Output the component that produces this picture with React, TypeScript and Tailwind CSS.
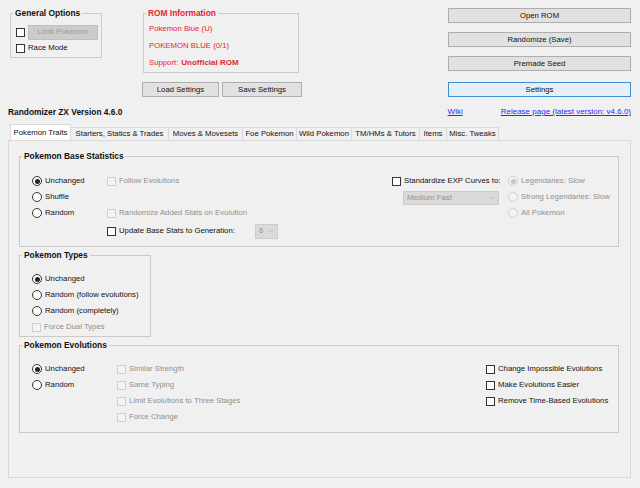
import { ChevronDown } from "lucide-react";
import type { ReactNode } from "react";

const Check = ({ label, disabled }: { label: string; disabled?: boolean }) => (
  <div className="flex items-center gap-[3px] h-[16px] whitespace-nowrap">
    <span
      className={`size-[9px] shrink-0 border ${
        disabled ? "border-[#d0d0d0] bg-[#f3f3f3]" : "border-[#333333] bg-white"
      }`}
    />
    <span className={disabled ? "text-[#8f8f8f]" : ""}>{label}</span>
  </div>
);

const Radio = ({ label, checked, disabled }: { label: string; checked?: boolean; disabled?: boolean }) => (
  <div className="flex items-center gap-[3px] h-[16px] whitespace-nowrap">
    <span
      className={`size-[10px] shrink-0 rounded-full border flex items-center justify-center ${
        disabled ? "border-[#d0d0d0] bg-[#f3f3f3]" : "border-[#333333] bg-white"
      }`}
    >
      {checked && (
        <span className={`size-[5px] rounded-full ${disabled ? "bg-[#c4c4c4]" : "bg-[#222222]"}`} />
      )}
    </span>
    <span className={disabled ? "text-[#8f8f8f]" : ""}>{label}</span>
  </div>
);

// fieldset keeps no padding so the legend sits 5px from the border; padding goes on the inner div
const Group = ({
  title,
  className,
  inner,
  children,
}: {
  title: string;
  className: string;
  inner: string;
  children: ReactNode;
}) => (
  <fieldset className={`border border-[#cacaca] ${className}`}>
    <legend className="ml-[2px] px-[2px] font-bold text-[8.4px] leading-[10px]">{title}</legend>
    <div className={inner}>{children}</div>
  </fieldset>
);

const Btn = ({ label, className }: { label: string; className: string }) => (
  <div
    className={`h-[15px] flex items-center justify-center border border-[#adadad] bg-[#e1e1e1] ${className}`}
  >
    {label}
  </div>
);

const Combo = ({ value, className }: { value: string; className: string }) => (
  <div
    className={`flex items-center justify-between border border-[#cccccc] bg-[#dadada] text-[#939393] pl-[3px] pr-[2px] ${className}`}
  >
    <span>{value}</span>
    <ChevronDown size={8} strokeWidth={1.5} className="text-[#a8a8a8]" />
  </div>
);

const tabs = [
  { name: "Pokemon Traits", w: "w-[61px]" },
  { name: "Starters, Statics & Trades", w: "w-[98px]" },
  { name: "Moves & Movesets", w: "w-[74px]" },
  { name: "Foe Pokemon", w: "w-[54px]" },
  { name: "Wild Pokemon", w: "w-[55px]" },
  { name: "TM/HMs & Tutors", w: "w-[68px]" },
  { name: "Items", w: "w-[27px]" },
  { name: "Misc. Tweaks", w: "w-[52px]" },
];

export default function App() {
  return (
    <div className="w-[640px] h-[488px] overflow-hidden bg-[#f0f0f0] pt-[8px] text-[7.75px] leading-[10px] text-[#111111] font-['Liberation_Sans',Arial,sans-serif]">
      {/* top area */}
      <div className="flex h-[91px]">
        <Group title="General Options" className="ml-[10px] w-[92px] h-[50px]" inner="pl-[5px] pt-[6px]">
          <div className="flex items-center gap-[3px] h-[16px]">
            <span className="size-[9px] border border-[#333333] bg-white" />
            <div className="w-[70px] h-[15px] flex items-center justify-center bg-[#cccccc] border border-[#bfbfbf] text-[#9a9a9a]">
              Limit Pokemon
            </div>
          </div>
          <Check label="Race Mode" />
        </Group>

        <div className="ml-[40px] w-[160px] flex flex-col">
          <Group
            title="ROM Information"
            className="ml-[1px] w-[156px] h-[65px] text-[#e3262e]"
            inner="pl-[5px] pt-[2px]"
          >
            <div className="h-[17px] flex items-center">Pokemon Blue (U)</div>
            <div className="h-[17px] flex items-center">POKEMON BLUE (0/1)</div>
            <div className="h-[17px] flex items-center gap-[3px]">
              Support: <span className="font-bold text-[8px]">Unofficial ROM</span>
            </div>
          </Group>
          <div className="flex gap-[3px] mt-[9px]">
            <Btn label="Load Settings" className="w-[77px]" />
            <Btn label="Save Settings" className="w-[80px]" />
          </div>
        </div>

        <div className="ml-auto mr-[9px] w-[183px] flex flex-col">
          <Btn label="Open ROM" className="w-full" />
          <Btn label="Randomize (Save)" className="w-full mt-[9px]" />
          <Btn label="Premade Seed" className="w-full mt-[9px]" />
          <div className="h-[15px] mt-[11px] flex items-center justify-center border border-[#3d8ed3] bg-[#e4eff9]">
            Settings
          </div>
        </div>
      </div>

      {/* version + links */}
      <div className="flex items-center h-[10px] mt-[8px]">
        <span className="ml-[8px] font-bold text-[8.4px]">Randomizer ZX Version 4.6.0</span>
        <span className="ml-auto text-[8px] text-[#2a2aff] underline">Wiki</span>
        <span className="ml-[38px] mr-[9px] text-[8px] text-[#2a2aff] underline">
          Release page (latest version: v4.6.0)
        </span>
      </div>

      {/* tabs */}
      <div className="flex items-end ml-[10px] mt-[7px] h-[16px]">
        {tabs.map((t, i) => (
          <div
            key={t.name}
            className={`${t.w} flex items-center justify-center whitespace-nowrap border-t border-r border-[#d9d9d9] ${
              i === 0 ? "h-[16px] bg-white border-l" : "h-[13px] bg-[#f0f0f0]"
            }`}
          >
            {t.name}
          </div>
        ))}
      </div>

      {/* tab panel */}
      <div className="ml-[8px] w-[623px] h-[338px] border border-[#d9d9d9] bg-[#f0f0f0] pl-[10px] pt-[10px]">
        <Group title="Pokemon Base Statistics" className="w-[600px] h-[96px]" inner="flex pt-[12px] pl-[12px]">
          <div className="w-[75px] flex flex-col">
            <Radio label="Unchanged" checked />
            <Radio label="Shuffle" />
            <Radio label="Random" />
          </div>
          <div className="w-[285px] flex flex-col">
            <Check label="Follow Evolutions" disabled />
            <div className="h-[16px]" />
            <Check label="Randomize Added Stats on Evolution" disabled />
            <div className="flex items-center mt-[2px]">
              <Check label="Update Base Stats to Generation:" />
              <Combo value="6" className="ml-[20px] w-[23px] h-[15px]" />
            </div>
          </div>
          <div className="w-[116px] flex flex-col">
            <Check label="Standardize EXP Curves to:" />
            <Combo value="Medium Fast" className="ml-[11px] mt-[2px] w-[96px] h-[14px]" />
          </div>
          <div className="flex flex-col">
            <Radio label="Legendaries: Slow" checked disabled />
            <Radio label="Strong Legendaries: Slow" disabled />
            <Radio label="All Pokemon" disabled />
          </div>
        </Group>

        <Group title="Pokemon Types" className="mt-[3px] w-[132px] h-[87px]" inner="pt-[11px] pl-[12px]">
          <Radio label="Unchanged" checked />
          <Radio label="Random (follow evolutions)" />
          <Radio label="Random (completely)" />
          <Check label="Force Dual Types" disabled />
        </Group>

        <Group title="Pokemon Evolutions" className="mt-[3px] w-[600px] h-[93px]" inner="flex pt-[11px] pl-[12px]">
          <div className="w-[85px] flex flex-col">
            <Radio label="Unchanged" checked />
            <Radio label="Random" />
          </div>
          <div className="w-[369px] flex flex-col">
            <Check label="Similar Strength" disabled />
            <Check label="Same Typing" disabled />
            <Check label="Limit Evolutions to Three Stages" disabled />
            <Check label="Force Change" disabled />
          </div>
          <div className="flex flex-col">
            <Check label="Change Impossible Evolutions" />
            <Check label="Make Evolutions Easier" />
            <Check label="Remove Time-Based Evolutions" />
          </div>
        </Group>
      </div>
    </div>
  );
}
